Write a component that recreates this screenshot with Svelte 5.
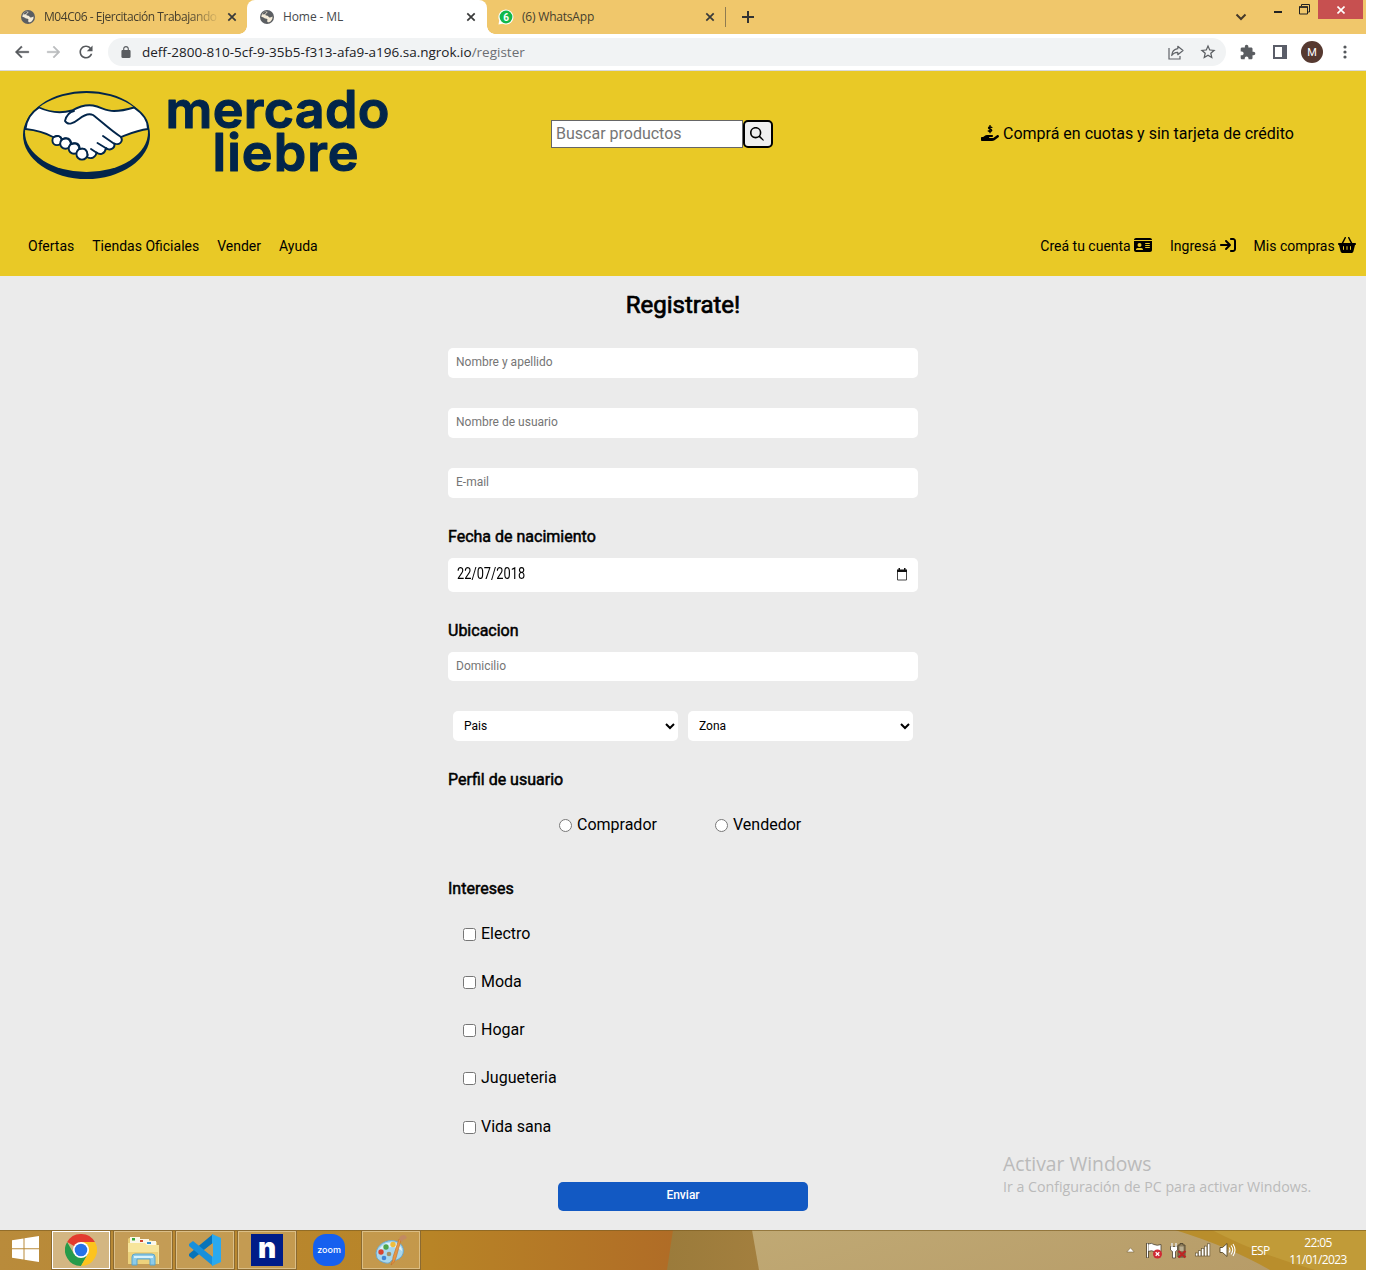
<script>
  const interests = ['Electro', 'Moda', 'Hogar', 'Jugueteria', 'Vida sana'];
  const links = ['Ofertas', 'Tiendas Oficiales', 'Vender', 'Ayuda'];
  const bars = [0, 1, 2, 3, 4];
</script>

{#snippet globe()}
  <svg class="globe" width="14" height="14" viewBox="0 0 14 14">
    <circle cx="7" cy="7" r="7" fill="#5b5e62" />
    <path d="M6.8 1.200C8.200 2 7 3 6.200 3.500C5.200 4.300 5 5.300 6.300 5.600C8 5.700 8.400 6.300 8.700 7.100C9.300 7.900 10.700 7.500 12.600 6.400C12.700 9 11.300 11.400 9 12.300C7.500 12.400 7 11.400 7.200 10.500C8 9.500 7 8.600 5.500 8.600C4.600 8.600 4.300 7.600 3 7.200L1.300 6.700C1.500 3.800 3.500 1.500 6.800 1.200Z" fill="#f5ecd9" />
    <path d="M7 1.100L3.500 2.500L2.300 4.500L4.700 4.300L6.200 2.800Z" fill="#5b5e62" />
  </svg>
{/snippet}

{#snippet cross()}
  <svg width="10" height="10" viewBox="0 0 10 10"><path d="M1.300 1.300L8.700 8.700M8.700 1.300L1.300 8.700" stroke="#393a3a" stroke-width="1.700" /></svg>
{/snippet}

<div class="screen">
  <div class="tabs">
    <div class="tab first">
      {@render globe()}
      <span class="tabtext fade">M04C06 - Ejercitación Trabajando</span>
      {@render cross()}
    </div>
    <div class="tab active">
      {@render globe()}
      <span class="tabtext home">Home - ML</span>
      {@render cross()}
    </div>
    <div class="tab third">
      <svg width="16" height="16" viewBox="0 0 16 16">
        <path d="M.5 15.500L1.200 11.500A7.500 7.500 0 1 1 4.500 14.800Z" fill="#fff" />
        <circle cx="8" cy="8" r="6.400" fill="#12b84a" />
        <text x="8" y="11.500" text-anchor="middle" class="badge">6</text>
      </svg>
      <span class="tabtext wapp">(6) WhatsApp</span>
      {@render cross()}
    </div>
    <i class="sep"></i>
    <svg class="plus" width="12" height="12" viewBox="0 0 12 12"><path d="M6 0V12M0 6H12" stroke="#333" stroke-width="2" /></svg>
    <div class="win">
      <svg class="chev" width="12" height="8" viewBox="0 0 12 8"><path d="M1.500 1.500L6 6L10.500 1.500" fill="none" stroke="#45392a" stroke-width="2" /></svg>
      <svg class="min" width="8" height="2" viewBox="0 0 8 2"><path d="M0 1H8" stroke="#222" stroke-width="2" /></svg>
      <svg class="max" width="11" height="11" viewBox="0 0 11 11"><path d="M2.500 2V.5H10.500V8H8.500M.5 3H8.500V10H.5Z" fill="none" stroke="#222" /><path d="M0 3H9" stroke="#222" stroke-width="1.500" /></svg>
      <div class="close"><svg width="8" height="8" viewBox="0 0 8 8"><path d="M.5 .5L7.500 7.500M7.500 .5L.5 7.500" stroke="#fff" stroke-width="1.600" /></svg></div>
    </div>
  </div>

  <div class="toolbar">
    <svg class="nav" viewBox="0 0 24 24"><path fill="#55585c" stroke="#55585c" stroke-width=".6" d="M21 11H6.830l5.590-5.590L11 4l-8 8 8 8 1.410-1.410L6.830 13H21v-2z" /></svg>
    <svg class="nav" viewBox="0 0 24 24"><path fill="#babcbe" stroke="#babcbe" stroke-width=".6" d="M12 4l-1.410 1.410L16.170 11H3v2h13.170l-5.580 5.590L12 20l8-8-8-8z" /></svg>
    <svg class="nav" viewBox="1 1 22 22"><path fill="#55585c" d="M17.650 6.350C16.200 4.900 14.210 4 12 4c-4.420 0-7.990 3.580-7.990 8s3.570 8 7.990 8c3.730 0 6.840-2.550 7.730-6h-2.080c-.82 2.330-3.040 4-5.650 4-3.310 0-6-2.690-6-6s2.690-6 6-6c1.660 0 3.140.69 4.220 1.780L13 11h7V4l-2.350 2.350z" /></svg>
    <div class="address">
      <svg width="10" height="12" viewBox="3.500 1 17 21"><path fill="#5a5d61" d="M18 8h-1V6c0-2.760-2.240-5-5-5S7 3.240 7 6v2H6c-1.100 0-2 .9-2 2v10c0 1.100.9 2 2 2h12c1.100 0 2-.9 2-2V10c0-1.100-.9-2-2-2zM9 6c0-1.660 1.340-3 3-3s3 1.340 3 3v2H9V6z" /></svg>
      <span class="url">deff-2800-810-5cf-9-35b5-f313-afa9-a196.sa.ngrok.io<em>/register</em></span>
      <svg class="share" width="16" height="15" viewBox="0 0 16 15" fill="none" stroke="#606368" stroke-width="1.200"><path d="M1 3V14H12V11" /><path d="M9.800 1.300L15 5.500L9.800 9.700V7.300C7 7.200 5 8.300 3.700 10.500C4 6.700 6 4.200 9.800 3.700Z" stroke-linejoin="round" /></svg>
      <svg width="16" height="16" viewBox="1.500 1.500 21 21"><path fill="#5a5d61" d="M22 9.240l-7.190-.62L12 2 9.190 8.630 2 9.240l5.460 4.730L5.820 21 12 17.270 18.180 21l-1.630-7.030L22 9.240zM12 15.400l-3.760 2.270 1-4.280-3.320-2.880 4.380-.38L12 6.100l1.710 4.040 4.380.38-3.320 2.880 1 4.280L12 15.400z" /></svg>
    </div>
    <svg class="puzzle" width="16" height="16" viewBox="1 0 23 23"><path fill="#5a5d61" d="M20.500 11H19V7c0-1.100-.9-2-2-2h-4V3.500C13 2.120 11.880 1 10.500 1S8 2.120 8 3.500V5H4c-1.100 0-1.990.9-1.990 2v3.800H3.500c1.490 0 2.700 1.210 2.700 2.700s-1.210 2.700-2.700 2.700H2V20c0 1.100.9 2 2 2h3.800v-1.500c0-1.490 1.210-2.700 2.700-2.700 1.490 0 2.700 1.210 2.700 2.700V22H17c1.100 0 2-.9 2-2v-4h1.500c1.380 0 2.500-1.120 2.500-2.500S21.880 11 20.500 11z" /></svg>
    <svg class="panel" width="14" height="14" viewBox="0 0 14 14"><path d="M1 1H13V13H1Z" fill="none" stroke="#5a5d68" stroke-width="2" /><path d="M9 0H14V14H9Z" fill="#5a5d68" /></svg>
    <div class="avatar">M</div>
    <svg class="dots" width="4" height="14" viewBox="0 0 4 14" fill="#55585c"><circle cx="2" cy="2" r="1.600" /><circle cx="2" cy="7" r="1.600" /><circle cx="2" cy="12" r="1.600" /></svg>
  </div>

  <header>
    <div class="top">
      <svg class="logo" width="370" height="100" viewBox="20 85 370 100">
        <ellipse cx="86.500" cy="135" rx="63.500" ry="44" fill="#02254a" />
        <ellipse cx="86.500" cy="132.500" rx="61.500" ry="39.500" fill="#e9c926" />
        <g stroke="#02254a" stroke-width="1.900" fill="#fff" stroke-linejoin="round" stroke-linecap="round">
          <path d="M39 107.500C50 112.500 61 113.500 72 110.500C80 106 86 104.500 93 105.500C102 107.500 106 111 114 111C122 111 129 109 134 107.500Q148.500 117 148 129C138 130 130 133.500 121 137C123.500 142 119 145.500 114.500 143.500C115 149 109.500 151 106 148C105 154 100 155.500 96.500 152.500C96 157.500 91 159.500 87 157L53 137C44 132 35 130 25.500 129Q27 115 39 107.500Z" />
          <circle cx="57" cy="140.500" r="4.600" /><circle cx="65.500" cy="143.500" r="5.300" /><circle cx="74" cy="148.500" r="5.300" /><circle cx="82" cy="154" r="5.600" />
          <path d="M53 134L70 128L92 140L96 151L87.500 155Q88.500 149 82.500 147.500L79 148Q79 142.500 74 142L70.500 142.500Q70 138 65 137L61.500 138Q60 135 56 134.500Z" stroke="none" />
          <path d="M54 137Q60 134 62 139.500Q70 135.500 71.500 144Q79.500 141 79.700 149Q87 147 87.700 155" fill="none" />
          <path d="M74 111C69 112 66 117 65 121C68 126 74 123 79 119C84 115 89 113 93 115C101 121 110 130 121 137M103 136L114.500 144M97.500 143L106.500 148.500M91 149L97 153" fill="none" />
        </g>
        <g class="brand">
          <text x="165.500" y="127.500" textLength="224">mercado</text>
          <text x="212.500" y="171" textLength="146">liebre</text>
        </g>
      </svg>
      <div class="search">
        <input placeholder="Buscar productos" />
        <button aria-label="Buscar"><svg width="14" height="14" viewBox="0 0 512 512"><path d="M416 208c0 45.900-14.900 88.300-40 122.700L498 463c10 10 10 22 2 30s-20 8-30 -2L330.700 376c-34.400 25.200-76.800 40-122.700 40C93.100 416 0 322.900 0 208S93.100 0 208 0S416 93.100 416 208zM208 358a150 150 0 1 0 0-300 150 150 0 1 0 0 300z" /></svg></button>
      </div>
      <div class="promo">
        <svg width="18" height="16" viewBox="0 0 576 512"><path d="M568.200 336.300c13.100 17.800 9.300 42.800-8.500 55.900L433.100 485.500c-23.400 17.200-51.600 26.500-80.700 26.500H32c-17.700 0-32-14.300-32-32V416c0-17.700 14.300-32 32-32H68.800l44.900-36c22.700-18.200 50.900-28 80-28H352c17.700 0 32 14.300 32 32s-14.300 32-32 32H272c-8.800 0-16 7.200-16 16s7.200 16 16 16H392.600l119.700-88.200c17.800-13.100 42.800-9.300 55.900 8.500z" /><path d="M347 78C315 55 240 50 240 94C240 142 344 120 344 170C344 216 270 210 232 188M288 15V245" fill="none" stroke="#000" stroke-width="42" stroke-linecap="round" /></svg>
        <span>Comprá en cuotas y sin tarjeta de crédito</span>
      </div>
    </div>
    <nav>
      {#each links as link}<a href="#top">{link}</a>{/each}
      <div class="account">
        <a href="#top">Creá tu cuenta <svg width="18" height="16" viewBox="0 0 576 512"><path fill-rule="evenodd" d="M0 96l576 0c0-35.300-28.700-64-64-64H64C28.700 32 0 60.700 0 96zm0 32V416c0 35.300 28.700 64 64 64H512c35.300 0 64-28.700 64-64V128H0zM64 405.300c0-29.500 23.900-53.300 53.300-53.300H234.700c29.500 0 53.300 23.900 53.300 53.300c0 5.900-4.800 10.700-10.700 10.700H74.700c-5.900 0-10.700-4.800-10.700-10.700zM176 192a64 64 0 1 1 0 128 64 64 0 1 1 0-128zm176 16c0-8.800 7.200-16 16-16H496c8.800 0 16 7.200 16 16s-7.200 16-16 16H368c-8.800 0-16-7.200-16-16zm0 64c0-8.800 7.200-16 16-16H496c8.800 0 16 7.200 16 16s-7.200 16-16 16H368c-8.800 0-16-7.200-16-16zm0 64c0-8.800 7.200-16 16-16H496c8.800 0 16 7.200 16 16s-7.200 16-16 16H368c-8.800 0-16-7.200-16-16z" /></svg></a>
        <a href="#top">Ingresá <svg width="16" height="16" viewBox="0 0 512 512"><path d="M352 96l64 0c17.700 0 32 14.300 32 32l0 256c0 17.700-14.300 32-32 32l-64 0c-17.700 0-32 14.300-32 32s14.300 32 32 32l64 0c53 0 96-43 96-96l0-256c0-53-43-96-96-96l-64 0c-17.700 0-32 14.300-32 32s14.300 32 32 32zm-9.400 182.600c12.500-12.500 12.500-32.800 0-45.300l-128-128c-12.500-12.500-32.800-12.500-45.300 0s-12.500 32.800 0 45.300L242.700 224 32 224c-17.700 0-32 14.300-32 32s14.300 32 32 32l210.700 0-73.400 73.400c-12.500 12.500-12.500 32.800 0 45.300s32.800 12.500 45.300 0l128-128z" /></svg></a>
        <a href="#top">Mis compras <svg width="18" height="16" viewBox="0 0 576 512"><path fill-rule="evenodd" d="M253.300 35.100c6.100-11.800 1.500-26.300-10.200-32.400s-26.300-1.500-32.400 10.200L117.600 192H32c-17.700 0-32 14.300-32 32s14.300 32 32 32L83.900 463.500C91 492 116.600 512 146 512H430c29.400 0 55-20 62.100-48.500L544 256c17.700 0 32-14.300 32-32s-14.300-32-32-32H458.400L365.300 12.900C359.200 1.200 344.700-3.400 332.900 2.700s-16.300 20.600-10.200 32.400L404.300 192H171.700L253.300 35.100zM192 304v96c0 8.800-7.200 16-16 16s-16-7.200-16-16V304c0-8.800 7.200-16 16-16s16 7.200 16 16zm96-16c8.800 0 16 7.200 16 16v96c0 8.800-7.200 16-16 16s-16-7.200-16-16V304c0-8.800 7.200-16 16-16zm128 16v96c0 8.800-7.200 16-16 16s-16-7.200-16-16V304c0-8.800 7.200-16 16-16s16 7.200 16 16z" /></svg></a>
      </div>
    </nav>
  </header>

  <main>
    <form>
      <h1>Registrate!</h1>
      <input class="field" placeholder="Nombre y apellido" />
      <input class="field" placeholder="Nombre de usuario" />
      <input class="field" placeholder="E-mail" />
      <h2>Fecha de nacimiento</h2>
      <div class="date">
        <span>22/07/2018</span>
        <svg width="10" height="13" viewBox="0 0 10 13"><path d="M.5 2.500H9.500V12H.5Z" fill="none" stroke="#444" /><path d="M0 1.500H10V4H0ZM1.500 0H3V2H1.500ZM7 0H8.500V2H7Z" fill="#111" /></svg>
      </div>
      <h2>Ubicacion</h2>
      <input class="field address-field" placeholder="Domicilio" />
      <div class="selects">
        <select aria-label="Pais"><option>Pais</option></select>
        <select aria-label="Zona"><option>Zona</option></select>
      </div>
      <h2>Perfil de usuario</h2>
      <div class="radios">
        <label><input type="radio" name="profile" /><span>Comprador</span></label>
        <label><input type="radio" name="profile" /><span>Vendedor</span></label>
      </div>
      <h2>Intereses</h2>
      <div class="checks">
        {#each interests as item}
          <label><input type="checkbox" /><span>{item}</span></label>
        {/each}
      </div>
      <button class="send" type="button">Enviar</button>
    </form>
    <div class="watermark">
      <span class="w1">Activar Windows</span>
      <span class="w2">Ir a Configuración de PC para activar Windows.</span>
    </div>
  </main>

  <footer>
    <svg class="wall" width="1366" height="40" viewBox="0 0 1366 40" preserveAspectRatio="none">
      <defs>
        <linearGradient id="w-left"><stop offset="0" stop-color="#b98b3b" /><stop offset=".64" stop-color="#b88426" /><stop offset="1" stop-color="#b06c26" /></linearGradient>
        <linearGradient id="w-mid"><stop offset="0" stop-color="#9b7b3b" /><stop offset="1" stop-color="#a37f3e" /></linearGradient>
        <linearGradient id="w-tan" x2="1" y2=".2"><stop offset="0" stop-color="#c0a974" /><stop offset="1" stop-color="#b79c68" /></linearGradient>
      </defs>
      <path d="M0 0H674V40H0Z" fill="url(#w-left)" />
      <path d="M673 0H754L760 40H667Z" fill="url(#w-mid)" />
      <path d="M752 0H1366V40H759Z" fill="url(#w-tan)" />
      <path d="M1175 0H1366V40H1270Q1230 17 1175 0Z" fill="#b98e2c" />
      <path d="M1212 0H1366V40H1315Q1260 25 1212 0Z" fill="#c19b38" />
      <path d="M0 .5H1366" stroke="#7c5d22" stroke-opacity=".65" />
    </svg>
    <div class="start">
      <svg width="27" height="26" viewBox="0 0 27 26" fill="#fff"><path d="M0 4.200L11.500 2.500V12.300H0ZM12.500 2.300L27 0V12.300H12.500ZM0 13.300H11.500V23.500L0 21.800ZM12.500 13.300H27V26L12.500 23.700Z" /></svg>
    </div>
    <div class="app current">
      <svg width="32" height="32" viewBox="0 0 32 32">
        <path d="M16 16L2.140 8A16 16 0 0 1 29.860 8Z" fill="#e33b2e" />
        <path d="M2.140 8A16 16 0 0 0 16 32L22.900 20L9 20Z" fill="#269b4a" />
        <path d="M29.860 8A16 16 0 0 1 16 32L22.900 20L16 8Z" fill="#fcc31e" />
        <circle cx="16" cy="16" r="8" fill="#fff" /><circle cx="16" cy="16" r="6.300" fill="#2672e8" />
      </svg>
    </div>
    <div class="app">
      <svg width="32" height="32" viewBox="0 0 32 32">
        <path d="M2 4H12L14 6H24L26 8H30V28H1V5Z" fill="#e9cd75" />
        <path d="M3 3H13V9H3ZM11 5H22V10H11ZM18 7H29V11H18Z" fill="#fbf7e8" />
        <path d="M5 4H8V6.500H5Z" fill="#36a83b" /><path d="M13 6H16V8H13Z" fill="#d04530" /><path d="M20 8H24V10H20Z" fill="#3992cc" />
        <path d="M1 9H18L20 11H32V30H1Z" fill="#f7e59b" /><path d="M1 18H31V30H1Z" fill="#edd27b" />
        <path d="M5 31V23Q5 20 8 20H25Q28 20 28 23V31H23V25H10V31Z" fill="#8dcbe8" stroke="#5ba5cb" /><path d="M7 23H26" stroke="#d7f2fb" stroke-width="2" />
      </svg>
    </div>
    <div class="app">
      <svg width="32" height="32" viewBox="0 0 32 32">
        <path d="M24 0V9L4 25L0 22V20Z" fill="#0874ba" /><path d="M24 32V23L4 7L0 10V12Z" fill="#1890dc" />
        <path d="M23 0L32 4V28L23 32Z" fill="#2aa9ef" /><path d="M24 9V23L15 16Z" fill="#c39c55" />
      </svg>
    </div>
    <div class="app"><div class="ninja">n</div></div>
    <div class="app plain"><div class="zoom">zoom</div></div>
    <div class="app">
      <svg width="32" height="32" viewBox="0 0 32 32">
        <path d="M1 19C2 11 11 5 20 7C29 9 31 19 25 24C20 28 17 25 16 27C15 31 6 29 2 24Z" fill="#a8d7ee" stroke="#6da8ca" />
        <path d="M3 18C6 10 13 7 20 9C24 10 27 13 27 17C20 10 10 13 3 18Z" fill="#def2fa" />
        <circle cx="6" cy="18" r="2.700" fill="#d84331" /><circle cx="11" cy="13" r="2.700" fill="#4ea64d" /><circle cx="18" cy="10.500" r="2.700" fill="#efbd3c" /><circle cx="14" cy="20" r="2.300" fill="#a69063" /><circle cx="9" cy="24" r="2.300" fill="#4384d5" />
        <path d="M26 6L21 24Q19 30 16 31Q18 27 18 23L24 5Z" fill="#e69645" stroke="#bd6e2e" stroke-width=".6" /><path d="M24 5Q25 1 29 1Q33 2 31 5Q28 5 27 8Z" fill="#c28a61" />
      </svg>
    </div>

    <div class="tray">
      <svg width="9" height="6" viewBox="0 0 9 6"><path d="M4.500 .8L8.200 5H.8Z" fill="#fff" stroke="#7c683f" stroke-width=".6" /></svg>
      <svg class="flag" width="17" height="17" viewBox="0 0 17 17"><path d="M1.500 1V16" stroke="#4b4232" stroke-width="2.600" /><path d="M2 2Q6 .5 8 2.500Q11 4 15 2.500V10Q10 12 8 9.500Q6 8 2 9.500Z" fill="#fff" stroke="#4b4232" stroke-width=".8" /><path d="M1.500 1.500V15.500" stroke="#fff" /><circle cx="11.500" cy="12" r="4.500" fill="#cf2934" /><path d="M9.700 10.200L13.300 13.800M13.300 10.200L9.700 13.800" stroke="#fff" stroke-width="1.300" /></svg>
      <svg class="battery" width="17" height="17" viewBox="0 0 17 17"><path d="M8 3H10V1.500H13V3H15V15H8Z" fill="#8c7b5a" stroke="#584c34" /><path d="M9.500 4.500H13.500V9H9.500Z" fill="#b9ad90" /><path d="M2 1V4M6 1V4M.5 4.500H7.500V8L5.500 9.500V16H2.500V9.500L.5 8Z" fill="#fff" stroke="#4b4232" stroke-width=".8" /><path d="M2 1V5M6 1V5" stroke="#fff" stroke-width="1.300" /><path d="M8.500 9L15.500 15.500M15.500 9L8.500 15.500" stroke="#bd2524" stroke-width="2.300" /></svg>
      <svg class="signal" width="16" height="14" viewBox="0 0 16 14">{#each bars as b}<rect x={b * 3 + .5} y={10 - b * 2.300} width="2.400" height={3 + b * 2.300} fill="#fff" stroke="#5a4b2d" stroke-width=".6" />{/each}</svg>
      <svg class="sound" width="17" height="16" viewBox="0 0 17 16"><path d="M1 5.500H3.500L8 1.500V14.500L3.500 10.500H1Z" fill="#fff" stroke="#554522" stroke-width=".9" /><path d="M10 5.500Q12 8 10 10.500M12 3.500Q15.500 8 12 12.500M14 2Q18 8 14 14" fill="none" stroke="#fff" stroke-width="1.100" /></svg>
      <span class="lang">ESP</span>
      <span class="clock"><span class="time">22:05</span><span class="day">11/01/2023</span></span>
    </div>
  </footer>
</div>

<style>
  :global(body) { background: #fff; overflow: hidden; }
  .screen { width: 1366px; height: 1270px; display: flex; flex-direction: column; font-family: Roboto, sans-serif; color: #000; }
  .screen * { box-sizing: border-box; }
  svg { display: block; flex: none; }
  span { white-space: nowrap; }

  .tabs { height: 34px; background: #f0c76b; display: flex; align-items: center; font: 12px/16px "Open Sans", sans-serif; flex: none; }
  .tab { display: flex; align-items: center; height: 34px; flex: none; }
  .first { width: 247px; padding-left: 21px; }
  .tabtext { color: #453e2d; margin-left: 9px; overflow: hidden; }
  .fade { width: 174px; margin-right: 9px; letter-spacing: -.46px; -webkit-mask-image: linear-gradient(90deg, #000 145px, transparent 176px); mask-image: linear-gradient(90deg, #000 145px, transparent 176px); }
  .active { position: relative; width: 240px; padding-left: 13px; background: #fff; border-radius: 8px 8px 0 0; }
  .active::before, .active::after { content: ""; position: absolute; bottom: 0; width: 8px; height: 8px; }
  .active::before { left: -8px; background: radial-gradient(circle at 0 0, transparent 7.5px, #fff 8px); }
  .active::after { right: -8px; background: radial-gradient(circle at 100% 0, transparent 7.5px, #fff 8px); }
  .home { width: 174px; margin-right: 9px; letter-spacing: -.1px; color: #45484c; }
  .third { width: 238px; padding-left: 11px; }
  .wapp { width: 174px; margin: 0 9px 0 8px; letter-spacing: -.2px; }
  .badge { font: bold 10px Roboto, sans-serif; fill: #fff; }
  .sep { width: 1px; height: 20px; background: #8f7b50; }
  .plus { margin-left: 16px; }
  .win { margin-left: auto; display: flex; height: 34px; align-items: flex-start; padding-right: 3px; }
  .chev { margin: 13px 27px 0 0; }
  .min { margin: 11px 17px 0 0; }
  .max { margin: 4px 8px 0 0; }
  .close { width: 45px; height: 19px; background: #c75050; display: grid; place-items: center; }

  .toolbar { height: 37px; flex: none; display: flex; align-items: center; border-bottom: 1px solid #dadada; padding-left: 13px; }
  .nav { width: 18px; height: 18px; margin-right: 14px; }
  .address { width: 1118px; height: 28px; margin-left: -1px; border-radius: 14px; background: #f1f3f4; display: flex; align-items: center; padding-left: 13px; gap: 11px; }
  .url { font: 13.500px/18px "Open Sans", sans-serif; color: #202124; width: 1015px; }
  .url em { font-style: normal; color: #6b6e72; }
  .share { margin-right: 5px; }
  .puzzle { margin-left: 14px; }
  .panel { margin-left: 17px; }
  .avatar { margin-left: 14px; width: 22px; height: 22px; border-radius: 50%; background: #563930; color: #fff; display: grid; place-items: center; font-size: 11px; }
  .dots { margin-left: 20px; }

  header { height: 205px; flex: none; background: #e9c926; }
  .top { height: 125px; display: flex; align-items: center; }
  .logo { margin: 3px 161px 0 20px; }
  .brand text { font: 600 52px Inter, sans-serif; fill: #02254a; stroke: #02254a; stroke-width: 1.200; stroke-linejoin: round; }
  .search { display: flex; width: 430px; }
  .search input { width: 192px; height: 28px; padding: 1px 4px; border: 1px solid #666; background: #fff; font: 16px Roboto, sans-serif; }
  .search input::placeholder { color: #757575; }
  .search button { width: 30px; height: 28px; padding: 0 2px 0 0; border: 2px solid #000; border-radius: 5px; background: #efefef; display: grid; place-items: center; }
  .promo { display: flex; align-items: center; gap: 4px; font-size: 16px; }
  .promo svg { margin-top: -2px; }
  nav { height: 80px; display: flex; align-items: center; padding: 20px 10px 0 28px; gap: 18px; font-size: 14px; line-height: 18px; }
  nav a { color: #000; text-decoration: none; display: flex; align-items: center; gap: 3.300px; }
  nav svg { margin-top: -2px; }
  .account { display: flex; gap: 18px; margin-left: auto; }

  main { height: 954px; flex: none; background: #ebebeb; position: relative; }
  form { width: 470px; margin: 0 auto; display: flex; flex-direction: column; }
  h1 { margin: 15px 0 29px; font: 400 24px/28px Roboto, sans-serif; text-align: center; -webkit-text-stroke: .7px #000; }
  h2 { margin: 0; height: 22px; font: 400 16px/20px Roboto, sans-serif; -webkit-text-stroke: .5px #000; }
  .field { width: 470px; height: 30px; margin: 0 0 30px; padding: 0 8px 2px; border: 0; border-radius: 5px; background: #fff; font: 12px Roboto, sans-serif; }
  .field::placeholder { color: #757575; }
  .field + h2 { margin-top: -1px; height: 21px; }
  .date { height: 34px; margin: 10px 0 29px; padding: 0 11px 0 9px; border-radius: 5px; background: #fff; display: flex; align-items: center; justify-content: space-between; }
  .date span { width: 80px; font-size: 16px; line-height: 20px; transform: scaleX(.8); transform-origin: left; margin-top: -2px; }
  .date svg { margin-top: -1px; }
  .address-field { margin: 9px 0 30px; height: 29px; }
  .selects { display: flex; gap: 10px; padding: 0 5px; margin-bottom: 29px; }
  select { width: 225px; height: 30px; border: 0; border-radius: 5px; background: #fff; padding: 0 7px; font: 12px Roboto, sans-serif; color: #000; }
  .radios { height: 20px; margin: 22px 0 45px; padding-left: 111px; display: flex; font-size: 16px; }
  .radios label { width: 156px; }
  label { display: flex; align-items: center; gap: 5px; height: 20px; }
  label input { margin: 0; width: 13px; height: 13px; }
  label input { margin-top: 2px; }
  .checks { margin: 22px 0 0 15px; display: flex; flex-direction: column; gap: 28.300px; }
  .send { width: 250px; height: 29px; margin: 45.800px auto 0; padding: 0 0 2px; border: 0; border-radius: 5px; background: #1259c3; color: #fff; font: 500 12px Roboto, sans-serif; }
  .watermark { position: absolute; left: 1003px; top: 876px; display: flex; flex-direction: column; font-family: "Open Sans", sans-serif; color: #bababa; }
  .w1 { font-size: 19.300px; line-height: 24px; }
  .w2 { font-size: 14.200px; line-height: 21px; }

  footer { height: 40px; flex: none; position: relative; display: flex; color: #fff; font-family: "Open Sans", sans-serif; }
  .wall { position: absolute; left: 0; top: 0; }
  .start { position: relative; width: 51px; padding: 6px 0 0 12px; }
  .app { position: relative; width: 60px; height: 40px; margin-right: 2px; border: 1px solid #8b6a31; display: grid; place-items: center; background: rgba(255, 255, 255, .17); box-shadow: inset 0 0 0 1px rgba(255, 245, 215, .4); flex: none; }
  .current { background: rgba(255, 255, 255, .38); box-shadow: inset 0 0 0 1px #fff; }
  .plain { background: none; box-shadow: none; border-color: transparent; }
  .ninja { width: 32px; height: 32px; background: #001c88; text-align: center; font: 900 28px/29px Inter, sans-serif; }
  .zoom { width: 32px; height: 32px; border-radius: 13px; background: #1660ef; text-align: center; font: 500 9px/31px Inter, sans-serif; }
  .tray { position: relative; margin-left: auto; display: flex; align-items: center; padding-right: 19px; font-size: 12px; }
  .flag { margin-left: 11px; }
  .battery { margin-left: 7px; }
  .signal { margin-left: 8px; }
  .sound { margin-left: 8px; }
  .lang { width: 20px; margin-left: 15px; font-size: 12px; letter-spacing: -.6px; }
  .clock { width: 58px; margin-left: 18px; display: flex; flex-direction: column; align-items: center; line-height: 17px; padding-top: 1px; }
  .time { letter-spacing: -.6px; }
  .day { letter-spacing: -.6px; }
</style>
